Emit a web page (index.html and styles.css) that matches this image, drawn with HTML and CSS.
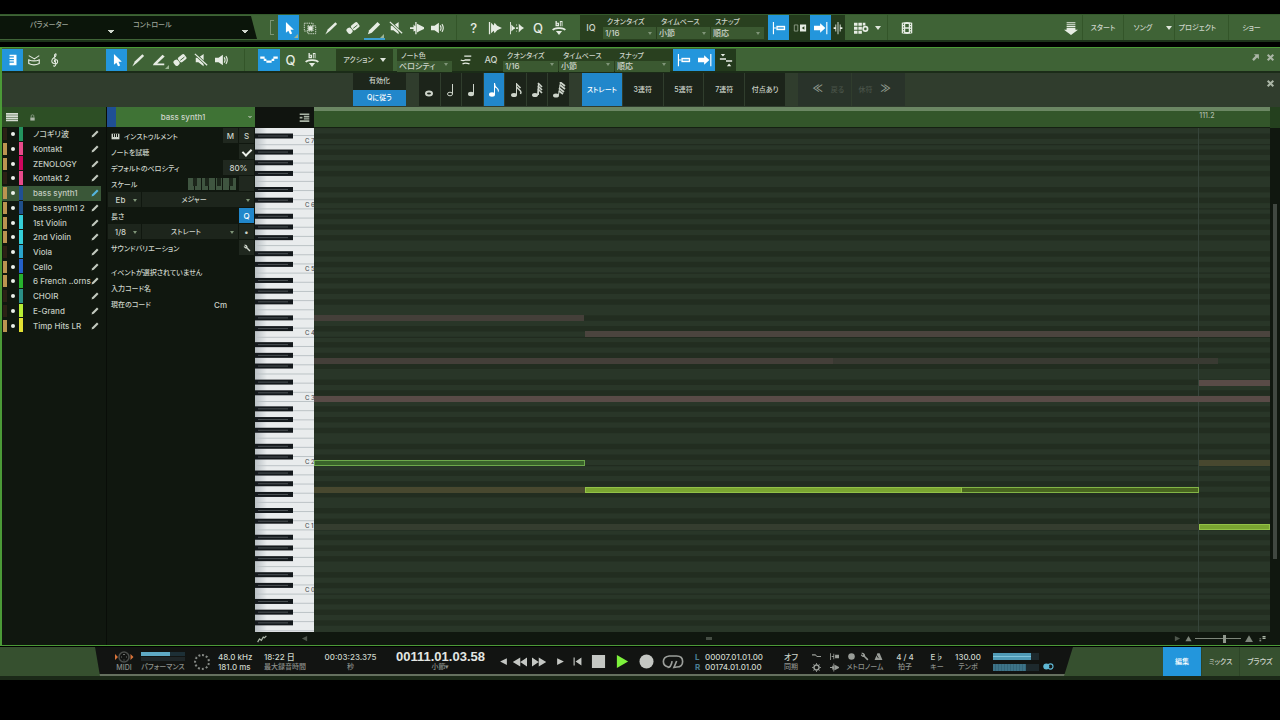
FILE: index.html
```
<!DOCTYPE html>
<html lang="ja">
	<head>
		<meta charset="UTF-8">
		<title>bass synth1</title>
		<link rel="stylesheet" href="styles.css">
	</head>
	<body>
		<svg class="sprite" width="0" height="0">
			<symbol id="arrow" viewBox="0 0 16 16"><path d="M4.500 1v12.500l2.800-2.500 1.900 4.200 2.400-1-1.900-4.200H13.500z"/></symbol>
			<symbol id="range" viewBox="0 0 16 16"><path d="M1.500 2.500h10v9h-10zM5.500 5.500h9v9h-9z" fill="none" stroke="currentColor" stroke-dasharray="1.500 1"/><path d="M6 6h5v5H6z"/></symbol>
			<symbol id="brush" viewBox="0 0 16 16"><path d="M1.500 15.500l3-6L13 1.500 15 3.500l-8 7.500z"/></symbol>
			<symbol id="pencil" viewBox="0 0 16 16"><path d="M1 15l1.500-4.500L12 1l3 3-9.500 9.500z"/></symbol>
			<symbol id="line" viewBox="0 0 16 16"><path d="M2 12L12 2l2.500 2L6 12h8v2H1z"/></symbol>
			<symbol id="eraser" viewBox="0 0 16 16"><g transform="rotate(-38 8 8)"><rect x="0" y="4.500" width="6" height="7" rx="2.500"/><rect x="6.700" y="4.500" width="9" height="7" rx="2"/><path d="M8 8.500h6" stroke="#3d6235"/></g></symbol>
			<symbol id="speaker" viewBox="0 0 16 16"><path d="M0 5.500h4L9 2v12l-5-3.500H0z"/><path d="M10.500 5q2 3 0 6M12.500 3.500q3 4.500 0 9" fill="none" stroke="currentColor" stroke-width="1.300"/></symbol>
			<symbol id="mute" viewBox="0 0 16 16"><path d="M2 5.500h3L11 1v14l-6-4.500H2z"/><path d="M1 1l14 13" stroke="#3d6235" stroke-width="3"/><path d="M1 1l14 13" stroke="currentColor" stroke-width="1.500"/></symbol>
			<symbol id="split" viewBox="0 0 16 16"><path d="M0 7h4V4l2 2V1h1.500v14H6v-4l-2 1V9H0zM8 3l3 1.500L16 7v2l-5 2.500L8 13z"/></symbol>
			<symbol id="wave" viewBox="0 0 16 16"><path d="M1 1h1.500v14H1zM3.500 2l3 3 1-3 3 3.500L16 8l-5.500 2.500-3 3.500-1-3-3 3z"/></symbol>
			<symbol id="wavegap" viewBox="0 0 16 16"><path d="M0 1h1v14H0zM1.500 4l3 3h1v2h-1l-3 3zM10 3l3 3 3 2-3 2-3 3zM7 4h1v1H7zM7 11h1v1H7zM7 7h2v2H7z"/></symbol>
			<symbol id="chordarc" viewBox="0 0 16 16"><path d="M4 0h1.500v2H8v4H4zm1.500 3.200v1.500h1V3.200zM9 0h3v6h-1V1h-1v5H9z"/><path d="M1 10.500q1-2.500 6-2.500h2q5 0 6 2.500" fill="none" stroke="currentColor" stroke-width="2"/><path d="M4.500 11.500h7L8 16z"/></symbol>
			<symbol id="keyb" viewBox="0 0 16 16"><path d="M4 2h8v12H4z"/><path d="M3 4.500h6M3 7.500h6M3 10.500h6" stroke="#2396dc" stroke-width="1.500"/></symbol>
			<symbol id="drum" viewBox="0 0 16 16"><path d="M2 7v5q6 3 12 0V7" fill="none" stroke="currentColor" stroke-width="1.300"/><path d="M2 8q6 2 12 0M2 3l7 4M14 3L8 7" fill="none" stroke="currentColor" stroke-width="1.200"/></symbol>
			<symbol id="clef" viewBox="0 0 16 16"><path d="M8.500 10.500Q6 9.500 8 8q3-1 3 2t-4 2-2-5l3.500-3Q10 1 8.500 1 7 1.500 7.500 4l1.500 9q-1 3-3 1.500" fill="none" stroke="currentColor" stroke-width="1.200"/></symbol>
			<symbol id="steps" viewBox="0 0 20 16"><path d="M0 4h5v2.500H0zM4 6.500h3V9H4zM7 8.500h6V11H7zM13 6.500h3V9h-3zM15 4h5v2.500h-5z"/></symbol>
			<symbol id="strum" viewBox="0 0 16 16"><path d="M6 3.500h8M2 8q3 1.500 5 0h6M4 12.500q3-2 8 0" fill="none" stroke="currentColor" stroke-width="1.500"/></symbol>
			<symbol id="snapstart" viewBox="0 0 16 16"><path d="M1 1h1.300v14H1zM2 7.500h3v1H2z"/><path d="M5 5.500h10v5H5z"/><path d="M6.500 8h7" stroke="#2396dc" stroke-width="1.500"/></symbol>
			<symbol id="snapend" viewBox="0 0 16 16"><path d="M0 5.500h7V2.500L13 8l-6 5.500v-3H0zM14 1h1.300v14H14z"/></symbol>
			<symbol id="snapev" viewBox="0 0 16 16"><path d="M1.500 4.500h4v7h-4z" fill="none" stroke="#91a08c"/><path d="M8 4h7v8H8z"/><path d="M13 6v4l-3-2z" fill="#29401f"/></symbol>
			<symbol id="cursor" viewBox="0 0 16 16"><path d="M7.500 1h1v14h-1zM5 4h1v8H5zM10 4h1v8h-1zM3 7h2v2H3zM11 7h2v2h-2z"/></symbol>
			<symbol id="gridset" viewBox="0 0 20 16"><path d="M2 2h4v3.500H2zM7 2h4v3.500H7zM12 2h3v3h-3zM2 6.500h4V10H2zM7 6.500h4V10H7zM2 11h4v3.500H2zM7 11h4v3.500H7z"/><circle cx="15" cy="9" r="2.500" fill="none" stroke="currentColor" stroke-width="2"/></symbol>
			<symbol id="film" viewBox="0 0 16 16"><path d="M2 2q6-1.500 12 0v12q-6 1.500-12 0z"/><path d="M6 3.500h4v3.700H6zM6 8.800h4v3.700H6z" fill="#3d6235"/><path d="M4 3v11M12 3v11" stroke="#3d6235" stroke-dasharray="1.500 1.500"/></symbol>
			<symbol id="dock" viewBox="0 0 16 16"><path d="M3 1h10v1H3zM3 3h10v1.300H3zM3 5.500h10v1.500H3zM3 8h10v2h3l-8 6-8-6h3z"/></symbol>
			<symbol id="fold" viewBox="0 0 16 16"><path d="M1 6h7v1.700H1zM8 8.300h7V10H8zM2 1h5L4.500 4zM9 15h5l-2.500-3z"/></symbol>
			<symbol id="popout" viewBox="0 0 16 16"><path d="M5 2h9v9l-3-3-6 6-3-3 6-6z"/></symbol>
			<symbol id="cross" viewBox="0 0 16 16"><path d="M3 3l10 10M13 3L3 13" stroke="currentColor" stroke-width="3.500"/></symbol>
			<symbol id="whole" viewBox="0 0 16 16"><ellipse cx="8" cy="11.500" rx="3" ry="2" fill="none" stroke="currentColor" stroke-width="2"/></symbol>
			<symbol id="half" viewBox="0 0 16 16"><ellipse cx="7" cy="12" rx="2.500" ry="1.800" fill="none" stroke="currentColor"/><path d="M9 2h1v10H9z"/></symbol>
			<symbol id="quarter" viewBox="0 0 16 16"><ellipse cx="7" cy="12" rx="3" ry="2.200"/><path d="M9 2h1v10H9z"/></symbol>
			<symbol id="eighth" viewBox="0 0 16 16"><ellipse cx="6" cy="12.500" rx="3" ry="2.200"/><path d="M8 1h1q0 3 2.500 5t.5 4.500q0-4-3-5v7H8z"/></symbol>
			<symbol id="n16" viewBox="0 0 16 16"><ellipse cx="6" cy="13" rx="3" ry="2"/><path d="M8 1h1v12H8z"/><path d="M8.500 2l4 4M8.500 5l4 4q1 1 0 3" fill="none" stroke="currentColor" stroke-width="1.500"/></symbol>
			<symbol id="n32" viewBox="0 0 16 16"><ellipse cx="6" cy="13" rx="3" ry="2"/><path d="M9 1h1v12H8z"/><path d="M9 1l4 4M9 4l4 4M9 7l4 4" fill="none" stroke="currentColor" stroke-width="1.700"/></symbol>
			<symbol id="n64" viewBox="0 0 16 16"><ellipse cx="5" cy="13.500" rx="3" ry="2"/><path d="M9 0h1L8 13H7z"/><path d="M9 0l5 4M9 3l5 4M8 6l5 4M8 9l4 3" fill="none" stroke="currentColor" stroke-width="1.700"/></symbol>
			<symbol id="lines" viewBox="0 0 12 9"><path d="M0 0h12v1.700H0zM0 2.200h12v1.700H0zM0 4.400h12v1.700H0zM0 6.600h12v1.700H0z"/></symbol>
			<symbol id="lock" viewBox="0 0 16 16"><path d="M3 8h10v7H3z"/><path d="M5 8V4q0-2 3-2t3 2v4" fill="none" stroke="currentColor" stroke-width="1.500"/></symbol>
			<symbol id="indent" viewBox="0 0 16 16"><path d="M1 2h14v2.500H1zM1 12h14v2.500H1zM7 5.500h8V8H7zM7 9h8v2H7zM1 7h4v2.500H1z"/></symbol>
			<symbol id="piano" viewBox="0 0 16 16"><path d="M1 3h14v10H1z"/><path d="M4.500 3v6M8 3v6M11.500 3v6" stroke="#10170f" stroke-width="1.800"/></symbol>
			<symbol id="wrench" viewBox="0 0 16 16"><path d="M3 1l4 1 2 3v2l6 6-2 2-6-6H5L1.500 6l.5-2 3 2 1-1-3-2z"/></symbol>
			<symbol id="curve" viewBox="0 0 16 16"><path d="M1 13l3-5 3 2 3-5 2 1 3-3" fill="none" stroke="currentColor" stroke-width="2"/></symbol>
			<symbol id="left" viewBox="0 0 16 16"><path d="M14 2v12L2 8z"/></symbol>
			<symbol id="right" viewBox="0 0 16 16"><path d="M2 2v12l12-6z"/></symbol>
			<symbol id="rew" viewBox="0 0 20 16"><path d="M11 2v12L1 8zM20 2v12l-9-6z"/></symbol>
			<symbol id="fwd" viewBox="0 0 20 16"><path d="M0 2v12l9-6zM9 2v12l10-6z"/></symbol>
			<symbol id="tostart" viewBox="0 0 16 16"><path d="M1 1h2v14H1zM15 1v14L4.500 8z"/></symbol>
			<symbol id="stop" viewBox="0 0 16 16"><path d="M1 1h14v14H1z"/></symbol>
			<symbol id="play" viewBox="0 0 16 16"><path d="M2 1v14l12-7z"/></symbol>
			<symbol id="rec" viewBox="0 0 16 16"><circle cx="8" cy="8" r="7.500"/></symbol>
			<symbol id="loop" viewBox="0 0 24 16"><path d="M7 14Q1.500 13 1.500 8T8 2h8q6.500 0 6.500 6T16 14l-3 .5 3-7M6 14.500q4 0 5-7" fill="none" stroke="currentColor" stroke-width="1.800"/></symbol>
			<symbol id="midi" viewBox="0 0 20 12"><circle cx="10" cy="6" r="5" fill="none" stroke="#4a4d4a" stroke-width="1.500"/><path d="M7 6h1M12 6h1M9 3.500h2M9.500 9h1" stroke="#6a6d6a"/><path d="M1 3v6l3-3zM16.500 3v6l3-3z" fill="#d9743a"/></symbol>
			<symbol id="preroll" viewBox="0 0 16 16"><path d="M0 4h6l3 3h7v2H9L6 6H0z"/></symbol>
			<symbol id="punch" viewBox="0 0 16 16"><path d="M0 2h1.500v12H0zM3 7h3V3h1.500v10H6V9H3zM9 5h7v6H9z"/></symbol>
			<symbol id="gear" viewBox="0 0 16 16"><circle cx="8" cy="8" r="4.500" fill="none" stroke="currentColor" stroke-width="2.500"/><path d="M8 0v3M8 13v3M0 8h3M13 8h3M2.500 2.500l2 2M11.500 11.500l2 2M13.500 2.500l-2 2M4.500 11.500l-2 2" stroke="currentColor" stroke-width="1.500"/></symbol>
			<symbol id="metro" viewBox="0 0 16 16"><path d="M6 2h4l5 12H1z"/><path d="M8 11l-5-8" stroke="#121412" stroke-width="1.500"/></symbol>
			<symbol id="hill" viewBox="0 0 16 16"><path d="M8 2l7 12H1z"/></symbol>
			<symbol id="zoomset" viewBox="0 0 16 16"><path d="M1 12h4v2H1zM1 8h4v1.500H1zM8 2h7v3H8zM8 6.500h7V9H8z"/></symbol>
			<symbol id="rings" viewBox="0 0 20 16"><circle cx="6" cy="8" r="5.500"/><circle cx="13.500" cy="8" r="4.700" fill="none" stroke="currentColor" stroke-width="2"/></symbol>
		</svg>

		<header class="topbar">
			<div class="params">
				<select class="plain" aria-label="パラメーター"><option>パラメーター</option></select>
				<select class="plain" aria-label="コントロール"><option>コントロール</option></select>
			</div>
			<span class="bracket"></span>
			<div class="tools tools-main">
				<button class="tool on more" aria-label="矢印"><svg><use href="#arrow"/></svg></button>
				<button class="tool" aria-label="範囲"><svg><use href="#range"/></svg></button>
				<button class="tool" aria-label="分割"><svg><use href="#brush"/></svg></button>
				<button class="tool" aria-label="消去"><svg><use href="#eraser"/></svg></button>
				<button class="tool under more" aria-label="ペイント"><svg><use href="#pencil"/></svg></button>
				<button class="tool" aria-label="ミュート"><svg><use href="#mute"/></svg></button>
				<button class="tool" aria-label="ベンド"><svg><use href="#split"/></svg></button>
				<button class="tool" aria-label="試聴"><svg><use href="#speaker"/></svg></button>
			</div>
			<div class="tools tools-help">
				<button class="tool letter">?</button>
				<button class="tool" aria-label="トランジェント"><svg><use href="#wave"/></svg></button>
				<button class="tool" aria-label="ギャップ"><svg><use href="#wavegap"/></svg></button>
				<button class="tool letter">Q</button>
				<button class="tool" aria-label="コード"><svg><use href="#chordarc"/></svg></button>
			</div>
			<div class="quant">
				<button class="iq">IQ</button>
				<label class="field">クオンタイズ<select><option>1/16</option></select></label>
				<label class="field">タイムベース<select><option>小節</option></select></label>
				<label class="field">スナップ<select><option>順応</option></select></label>
			</div>
			<div class="snaps">
				<button class="tool on" aria-label="スナップ開始"><svg><use href="#snapstart"/></svg></button>
				<button class="tool" aria-label="イベントにスナップ"><svg><use href="#snapev"/></svg></button>
				<button class="tool on" aria-label="スナップ終了"><svg><use href="#snapend"/></svg></button>
				<button class="tool thin" aria-label="カーソル"><svg><use href="#cursor"/></svg></button>
			</div>
			<button class="tool gridbtn" aria-label="グリッド"><svg><use href="#gridset"/></svg><i class="tri"></i></button>
			<button class="tool film" aria-label="ビデオ"><svg><use href="#film"/></svg></button>
			<nav class="pages">
				<button class="tool" aria-label="ドック"><svg><use href="#dock"/></svg></button>
				<button class="page w-start">スタート</button>
				<button class="page w-song">ソング<i class="tri"></i></button>
				<button class="page w-project">プロジェクト</button>
				<button class="page w-show">ショー</button>
			</nav>
		</header>

		<main class="editor">
			<div class="editbar">
				<div class="tools tools-view">
					<button class="tool on" aria-label="ピアノ"><svg><use href="#keyb"/></svg></button>
					<button class="tool" aria-label="ドラム"><svg><use href="#drum"/></svg></button>
					<button class="tool" aria-label="スコア"><svg><use href="#clef"/></svg></button>
				</div>
				<div class="tools tools-edit">
					<button class="tool on" aria-label="矢印"><svg><use href="#arrow"/></svg></button>
					<button class="tool" aria-label="ペイント"><svg><use href="#brush"/></svg></button>
					<button class="tool more" aria-label="直線"><svg><use href="#line"/></svg></button>
					<button class="tool" aria-label="消去"><svg><use href="#eraser"/></svg></button>
					<button class="tool" aria-label="ミュート"><svg><use href="#mute"/></svg></button>
					<button class="tool" aria-label="試聴"><svg><use href="#speaker"/></svg></button>
				</div>
				<div class="tools tools-auto">
					<button class="tool on" aria-label="オートスクロール"><svg><use href="#steps"/></svg></button>
					<button class="tool letter">Q</button>
					<button class="tool" aria-label="コード"><svg><use href="#chordarc"/></svg></button>
				</div>
				<button class="action">アクション<i class="tri"></i></button>
				<div class="quant quant-edit">
					<label class="field">ノート色<select><option>ベロシティ</option></select></label>
					<button class="tool" aria-label="ストラム"><svg><use href="#strum"/></svg></button>
					<button class="iq">AQ</button>
					<label class="field">クオンタイズ<select><option>1/16</option></select></label>
					<label class="field">タイムベース<select><option>小節</option></select></label>
					<label class="field">スナップ<select><option>順応</option></select></label>
				</div>
				<div class="snaps">
					<button class="tool on" aria-label="スナップ開始"><svg><use href="#snapstart"/></svg></button>
					<button class="tool on" aria-label="スナップ終了"><svg><use href="#snapend"/></svg></button>
					<button class="tool" aria-label="折りたたみ"><svg><use href="#fold"/></svg></button>
				</div>
				<div class="winbtns">
					<button class="small" aria-label="切り離す"><svg><use href="#popout"/></svg></button>
					<button class="small" aria-label="閉じる"><svg><use href="#cross"/></svg></button>
				</div>
			</div>

			<div class="qbar">
				<div class="enable">
					<button>有効化</button>
					<button class="on">Qに従う</button>
				</div>
				<div class="lengths">
					<button aria-label="全音符"><svg><use href="#whole"/></svg></button>
					<button aria-label="2分音符"><svg><use href="#half"/></svg></button>
					<button aria-label="4分音符"><svg><use href="#quarter"/></svg></button>
					<button class="on" aria-label="8分音符"><svg><use href="#eighth"/></svg></button>
					<button aria-label="16分音符"><svg><use href="#n16"/></svg></button>
					<button aria-label="32分音符"><svg><use href="#n32"/></svg></button>
					<button aria-label="64分音符"><svg><use href="#n64"/></svg></button>
				</div>
				<div class="tuplets">
					<button class="on">ストレート</button>
					<button>3連符</button>
					<button>5連符</button>
					<button>7連符</button>
					<button>付点あり</button>
				</div>
				<div class="stepnav">
					<button disabled><b>≪</b>戻る</button>
					<button disabled>休符<b>≫</b></button>
				</div>
				<button class="small" aria-label="閉じる"><svg><use href="#cross"/></svg></button>
			</div>

			<div class="work">
				<section class="tracks">
					<div class="tracks-head">
						<button class="small" aria-label="リスト"><svg><use href="#lines"/></svg></button>
						<button class="small" aria-label="ロック"><svg><use href="#lock"/></svg></button>
					</div>
					<ul id="trackList"></ul>
				</section>

				<section class="inspector">
					<select class="insp-head" aria-label="トラック"><option>bass synth1</option></select>
					<div class="row"><svg><use href="#piano"/></svg><span class="name">インストゥルメント</span><button class="cell">M</button><button class="cell">S</button></div>
					<label class="row"><span class="name">ノートを試聴</span><input class="cell check" type="checkbox" checked></label>
					<label class="row"><span class="name">デフォルトのベロシティ</span><input class="cell vel" type="text" value="80%"></label>
					<div class="row"><span class="name">スケール</span><span class="minikeys"></span><button class="cell" aria-label="スケール適用"></button></div>
					<div class="row"><span class="drop key"><select aria-label="キー"><option>Eb</option></select></span><span class="drop"><select aria-label="スケール"><option>メジャー</option></select></span></div>
					<div class="row"><span class="name">長さ</span><button class="cell on">Q</button></div>
					<div class="row"><span class="drop key"><select aria-label="長さ"><option>1/8</option></select></span><span class="drop"><select aria-label="種類"><option>ストレート</option></select></span><button class="cell">•</button></div>
					<div class="row"><span class="name">サウンドバリエーション</span><button class="cell" aria-label="設定"><svg><use href="#wrench"/></svg></button></div>
					<div class="info">
						<p>イベントが選択されていません</p>
						<p>入力コード名</p>
						<p>現在のコード<span>Cm</span></p>
					</div>
				</section>

				<section class="roll">
					<div class="keyhead"><button class="small" aria-label="表示"><svg><use href="#indent"/></svg></button></div>
					<div class="ruler"><span>111.2</span></div>
					<div class="corner"></div>
					<div class="keys" id="keys"></div>
					<div class="grid" id="grid"></div>
					<div class="vscroll"><i></i></div>
					<div class="rollfoot">
						<button class="small" aria-label="オートメーション"><svg><use href="#curve"/></svg></button>
						<button class="small dim" aria-label="左へ"><svg><use href="#left"/></svg></button>
						<span class="hthumb"></span>
						<button class="small dim" aria-label="右へ"><svg><use href="#right"/></svg></button>
						<svg><use href="#hill"/></svg>
						<input class="zoomer" type="range" value="65" aria-label="ズーム">
						<svg class="big"><use href="#hill"/></svg>
						<button class="small" aria-label="ズーム設定"><svg><use href="#zoomset"/></svg></button>
					</div>
				</section>
			</div>
		</main>

		<footer class="transport">
			<div class="deck">
				<div class="stat c-midi"><svg><use href="#midi"/></svg><small>MIDI</small></div>
				<div class="stat c-perf"><div class="bars"><i></i><i></i></div><small>パフォーマンス</small></div>
				<div class="c-dial"></div>
				<div class="stat lefty c-rate"><span>48.0 kHz</span><span>181.0 ms</span></div>
				<div class="stat lefty c-rec"><span>18:22 日</span><small>最大録音時間</small></div>
				<div class="stat c-sec"><span>00:03:23.375</span><small>秒</small></div>
				<div class="stat c-pos"><strong>00111.01.03.58</strong><small>小節▾</small></div>
				<div class="buttons">
					<button class="s" aria-label="前へ"><svg><use href="#left"/></svg></button>
					<button class="m" aria-label="巻き戻し"><svg><use href="#rew"/></svg></button>
					<button class="m" aria-label="早送り"><svg><use href="#fwd"/></svg></button>
					<button class="s" aria-label="次へ"><svg><use href="#right"/></svg></button>
					<button class="s" aria-label="先頭へ"><svg><use href="#tostart"/></svg></button>
					<button class="l" aria-label="停止"><svg><use href="#stop"/></svg></button>
					<button class="l playing" aria-label="再生"><svg><use href="#play"/></svg></button>
					<button class="l" aria-label="録音"><svg><use href="#rec"/></svg></button>
					<button class="xl" aria-label="ループ"><svg><use href="#loop"/></svg></button>
				</div>
				<div class="stat lefty c-loop"><span><b>L</b>00007.01.01.00</span><span><b>R</b>00174.01.01.00</span></div>
				<div class="stat c-sync"><span>オフ</span><small>同期</small></div>
				<div class="c-icons"><svg><use href="#preroll"/></svg><svg><use href="#punch"/></svg><svg><use href="#gear"/></svg><svg><use href="#split"/></svg></div>
				<div class="stat c-metro"><div class="trio"><svg><use href="#rec"/></svg><svg><use href="#wrench"/></svg><svg><use href="#metro"/></svg></div><small>メトロノーム</small></div>
				<div class="stat c-sig"><span>4 / 4</span><small>拍子</small></div>
				<div class="stat c-key"><span>E♭</span><small>キー</small></div>
				<div class="stat c-tempo"><span>130.00</span><small>テンポ</small></div>
				<div class="c-meter"><i></i><i></i></div>
				<svg class="rings"><use href="#rings"/></svg>
			</div>
			<div class="views">
				<button class="on">編集</button>
				<button>ミックス</button>
				<button>ブラウズ</button>
			</div>
		</footer>

		<script type="text/javascript">
			//名前, 色, メーター点灯
			var tracks = [
				["ノコギリ波","#23935f",0],["Kontakt","#e84a8a",1],["ZENOLOGY","#d0065f",1],["Kontakt 2","#e84a8a",0],
				["bass synth1","#1f4f94",1],["bass synth1 2","#1f4f8a",1],["1st Violin","#35cfd8",1],["2nd Violin","#35cfd8",1],
				["Viola","#2aa5cc",0],["Cello","#2461c9",1],["6 French ..orns","#27b32e",1],["CHOIR","#2b8f86",0],
				["E-Grand","#b8ee35",0],["Timp Hits LR","#e2e033",1]
			];
			var html = "";
			for(var i = 0; i < tracks.length; i++){
				var t = tracks[i];
				html += '<li' + (i == 4 ? ' class="selected"' : '') + '><i class="act' + (t[2] ? ' lit' : '') + '"></i><i class="dot"></i>'
					+ '<i class="color" style="background:' + t[1] + '"></i><button>' + t[0] + '</button>'
					+ '<svg><use href="#pencil"/></svg></li>';
			}
			document.getElementById("trackList").innerHTML = html;

			//1オクターブの高さと、一番上のC7の下端
			var H = 504, OCT = 64.2, SEMI = OCT / 12, C7 = 16.2;
			var black = [1,3,6,8,10];
			var white = "", dark = "", rows = "", labels = "";
			for(var o = -1; o < 9; o++){
				var base = C7 + o * OCT;
				for(var w = 0; w < 7; w++){
					white += '<rect x="0" y="' + (base - w * OCT / 7) + '" width="59" height="1" fill="#bcc3c6"/>';
				}
				for(var b = 0; b < black.length; b++){
					var y = base - (black[b] + 1) * SEMI;
					dark += '<rect x="0" y="' + y + '" width="38" height="5" fill="#14191c"/><rect x="3" y="' + (y + 2) + '" width="30" height="1" fill="#4d5356"/>';
					rows += '<rect x="0" y="' + y + '" width="100" height="' + SEMI + '" fill="#222d20"/>';
				}
				rows += '<rect x="0" y="' + base + '" width="100" height="1" fill="#202a1e"/>';
				if(o >= 0 && o < 8){
					labels += '<span style="top:' + (base - 3.5) / H * 100 + '%">C ' + (7 - o) + '</span>';
				}
			}
			document.getElementById("keys").innerHTML = '<svg viewBox="0 0 59 504" preserveAspectRatio="none">' + white + dark + '</svg>' + labels;

			//オクターブ, 半音, 開始, 終了(0-956), 種類
			var notes = [
				[4,3,0,270,"g1"],[4,0,271,956,"g2"],[3,7,0,519,"g1"],[3,7,519,904,"g0"],
				[3,3,885,956,"g3"],[3,0,0,956,"g3"],[2,0,0,271,"sel"],[2,0,885,956,"olive"],
				[1,7,0,271,"olive"],[1,7,271,885,"long"],[1,7,271,648,"bright"],[1,0,0,885,"faint"],[1,0,885,956,"bright"]
			];
			var bars = "";
			for(var n = 0; n < notes.length; n++){
				var k = notes[n];
				var noteTop = C7 + (7 - k[0]) * OCT - (k[1] + 1) * SEMI;
				bars += '<i class="note ' + k[4] + '" style="top:' + noteTop / H * 100 + '%;left:' + k[2] / 9.56 + '%;width:' + (k[3] - k[2]) / 9.56 + '%"></i>';
			}
			document.getElementById("grid").innerHTML = '<svg viewBox="0 0 100 504" preserveAspectRatio="none">' + rows + '</svg><i class="beat"></i>' + bars;
		</script>
	</body>
</html>
```
FILE: styles.css
```
*{
	margin: 0;
	padding: 0;
	box-sizing: border-box;
	list-style: none;
}
body{
	display: flex;
	flex-direction: column;
	height: 100vh;
	padding: 14px 0 40px;
	background-color: #000;
	color: #cdd4ca;
	font: 500 8px/10px Inter, "Noto Sans CJK JP", sans-serif;
	font-feature-settings: "palt";
	white-space: nowrap;
	overflow: hidden;
}
button, select, input{
	border: 0;
	border-radius: 0;
	background-color: transparent;
	color: inherit;
	font: inherit;
	font-feature-settings: inherit;
	appearance: none;
	outline: none;
}
svg{
	display: block;
	fill: currentColor;
	flex: none;
}
.sprite{
	position: absolute;
}
.tri{
	display: inline-block;
	border: 3px solid transparent;
	border-top: 4px solid #dfe6db;
	border-bottom: 0;
}

/* 上のツールバー */
.topbar{
	display: flex;
	height: 28px;
	flex: none;
	background-color: #3f6336;
	border-top: 1px solid #345a2c;
	border-bottom: 2px solid #1d331a;
}
.params{
	display: flex;
	width: 257px;
	margin: 1px 0;
	padding-right: 5px;
	background-color: #0b150a;
	clip-path: polygon(0 0, 251px 0, 257px 100%, 0 100%);
}
.plain{
	width: 118px;
	padding: 0 30px 6px 30px;
	color: #9ba398;
	font-size: 7px;
	background: linear-gradient(to bottom left, #cfd6cc 50%, transparent 51%) no-repeat right 7px bottom 5px / 3px 4px, linear-gradient(to bottom right, #cfd6cc 50%, transparent 51%) no-repeat right 4px bottom 5px / 3px 4px;
}
.plain + .plain{
	width: 134px;
	padding: 0 20px 6px 15px;
}
.bracket{
	width: 4px;
	height: 15px;
	margin: 5px 4px 0 13px;
	border: 1px solid #7c9573;
	border-right: 0;
}
.tools{
	display: flex;
}
.tool{
	display: flex;
	align-items: center;
	justify-content: center;
	flex: 1 1 0;
	color: #e6ece3;
	position: relative;
}
.tool svg{
	width: 14px;
	height: 14px;
}
.letter{
	font-size: 13px;
}
.on{
	background-color: #2396dc;
	color: #fff;
}
.under{
	box-shadow: inset 0 -2px #3d9fd0;
}
.more::after{
	content: "";
	position: absolute;
	right: 1px;
	bottom: 2px;
	border: 2px solid #9db596;
	border-top-color: transparent;
	border-left-color: transparent;
}
.tools-main{
	width: 171px;
	margin-right: 7px;
}
.tools-help{
	width: 124px;
	padding: 0 10px 0 6px;
	border-left: 1px solid #335529;
}
.quant{
	display: flex;
	gap: 1px;
	padding-right: 4px;
	background-color: #29401f;
}
.iq{
	width: 22px;
	text-align: center;
	font-size: 9px;
}
.field{
	display: flex;
	flex-direction: column;
	width: 53px;
	padding-top: 1px;
	text-indent: 4px;
	font-size: 7px;
	line-height: 11px;
	position: relative;
}
.field select{
	width: 100%;
	height: 12px;
	padding-left: 2px;
	background-color: #3b5931;
	font-size: 8px;
	text-indent: 0;
}
.field::after, .drop::after{
	content: "";
	position: absolute;
	right: 4px;
	bottom: 5px;
	border: 2px solid transparent;
	border-top: 3px solid #7f9578;
	border-bottom: 0;
}
.snaps{
	display: flex;
	background-color: #233a1c;
}
.snaps .tool{
	flex: none;
	width: 21px;
}
.snaps .thin{
	width: 14px;
}
.topbar .gridbtn{
	flex: none;
	gap: 5px;
	width: 43px;
	border-right: 1px solid #335529;
}
.gridbtn svg, .tools-auto .on svg{
	width: 18px;
}
.topbar .film{
	flex: none;
	width: 37px;
}
.pages{
	display: flex;
	margin-left: auto;
}
.pages .tool{
	flex: none;
	width: 22px;
}
.page{
	border-left: 1px solid #335529;
	font-size: 7px;
}
.w-start{
	width: 41px;
}
.w-song{
	width: 51px;
	padding-left: 8px;
}
.w-song .tri{
	margin-left: 14px;
}
.w-project{
	width: 54px;
	padding-right: 8px;
}
.w-show{
	width: 52px;
	padding-right: 6px;
}

/* エディター */
.editor{
	display: flex;
	flex-direction: column;
	flex: 1;
	min-height: 0;
	margin-top: 5px;
	border: 1px solid #4b9a37;
	border-width: 1px 0 1px 2px;
	background-color: #10170f;
}
.editbar{
	display: flex;
	height: 25px;
	flex: none;
	padding-top: 1px;
	background-color: #3f6336;
	border-bottom: 2px solid #1b2c18;
}
.tools-view{
	width: 64px;
	margin-right: 40px;
}
.tools-edit{
	width: 139px;
	padding-right: 11px;
	border-right: 1px solid #335529;
}
.tools-auto{
	width: 78px;
	margin-left: 13px;
	padding-right: 13px;
}
.action{
	width: 57px;
	margin-right: 2px;
	background-color: #29401f;
	font-size: 7px;
}
.action .tri{
	margin-left: 6px;
}
.quant-edit{
	padding-right: 3px;
	border-left: 2px solid #3f6336;
}
.quant-edit .field{
	width: 55px;
}
.quant-edit .tool{
	flex: none;
	width: 26px;
}
.winbtns{
	display: flex;
	gap: 5px;
	margin: 3px 5px 0 auto;
	height: 10px;
}
.small{
	display: flex;
	align-items: center;
	justify-content: center;
	width: 10px;
	color: #aab5a6;
}
.small svg{
	width: 9px;
	height: 9px;
}

.qbar{
	display: flex;
	height: 34px;
	flex: none;
	padding: 0 5px 1px 351px;
	background-color: #303d2d;
}
.qbar button{
	font-size: 7px;
}
.enable{
	display: grid;
	grid-template-rows: 1fr 1fr;
	width: 53px;
	margin-right: 13px;
	background-color: #1d261b;
}
.lengths{
	display: flex;
	width: 150px;
	gap: 1px;
	margin-right: 13px;
}
.lengths button{
	display: flex;
	align-items: center;
	justify-content: center;
	flex: 1;
	background-color: #1c241a;
}
.lengths svg{
	width: 16px;
	height: 16px;
}
.tuplets{
	display: flex;
	gap: 1px;
	width: 203px;
	margin-right: 13px;
}
.tuplets button{
	flex: 1;
	background-color: #1c241a;
}
.qbar .on{
	background-color: #2187cb;
}
.stepnav{
	display: flex;
	gap: 1px;
	width: 107px;
}
.stepnav button{
	flex: 1;
	background-color: #29332a;
	color: #495349;
}
.stepnav b{
	margin: 0 8px;
	color: #929c90;
	font-size: 10px;
	line-height: 8px;
}
.qbar > .small{
	height: 20px;
	margin-left: auto;
}

.work{
	display: flex;
	flex: 1;
	min-height: 0;
}
.tracks{
	width: 105px;
	border-right: 1px solid #090d08;
	color: #c3cbc0;
}
.tracks-head{
	display: flex;
	align-items: center;
	gap: 10px;
	height: 20px;
	padding-left: 5px;
	background-color: #2d4f25;
}
.tracks-head .small:first-child svg{
	width: 12px;
	color: #d5dcd2;
}
.tracks-head .small + .small svg{
	width: 7px;
}
.tracks ul{
	display: grid;
	grid-auto-rows: 1fr;
	height: 206px;
}
.tracks li{
	display: flex;
	align-items: center;
	margin-right: 6px;
	padding-left: 1px;
}
.tracks .selected{
	background-color: #3a5738;
}
.act{
	width: 4px;
	height: 12px;
	background-color: #2b2115;
}
.lit{
	background-color: #ba9450;
}
.dot{
	width: 4px;
	height: 4px;
	margin: 0 4px;
	border-radius: 50%;
	background-color: #edf1eb;
}
.color{
	width: 4px;
	height: 100%;
	border-bottom: 1px solid #10170f;
}
.tracks li button{
	flex: 1;
	padding-left: 10px;
	text-align: left;
}
.tracks li svg{
	width: 8px;
	height: 8px;
	margin-right: 2px;
}
.selected svg{
	color: #55b5df;
}

.inspector{
	width: 148px;
	font-size: 7px;
}
.insp-head{
	width: 100%;
	height: 20px;
	margin-bottom: 1px;
	border-left: 9px solid #1f4f94;
	padding-right: 5px;
	background: linear-gradient(to bottom left, #8aa583 50%, transparent 51%) no-repeat right 5px center / 2px 3px, linear-gradient(to bottom right, #8aa583 50%, transparent 51%) no-repeat right 3px center / 2px 3px, #3f7335;
	font-size: 8px;
	text-align-last: center;
}
.row{
	display: flex;
	gap: 1px;
	height: 16px;
	padding: 0 1px;
}
.row > svg{
	width: 9px;
	height: 9px;
	margin: 4px 3px 0;
}
.name{
	flex: 1;
	padding-left: 3px;
	line-height: 17px;
}
.row svg + .name{
	padding-left: 0;
}
.cell{
	width: 15px;
	height: 15px;
	background-color: #20281f;
	text-align: center;
	font-size: 8px;
}
.cell.on{
	background-color: #2187cb;
}
.cell svg{
	width: 8px;
	height: 8px;
	margin: auto;
}
.vel{
	width: 31px;
}
.check:checked::before{
	content: "";
	display: block;
	width: 4px;
	height: 7px;
	margin: 3px 5px;
	border: solid #eef2ec;
	border-width: 0 2px 2px 0;
	transform: rotate(45deg);
}
.minikeys{
	width: 49px;
	height: 12px;
	margin: 2px 1px 0 0;
	background: repeating-linear-gradient(90deg, transparent 0 5px, #1c261b 5px 9px, transparent 9px 12px) no-repeat 0 0 / 100% 8px, repeating-linear-gradient(90deg, #3f5540 0 6px, #10170f 6px 7px);
}
.drop{
	flex: 1;
	height: 15px;
	background-color: #1d251c;
	position: relative;
}
.drop select{
	width: 100%;
	height: 15px;
	padding-right: 8px;
	text-align-last: center;
}
.drop.key{
	flex: none;
	width: 33px;
	font-size: 8px;
}
.info{
	padding: 9px 4px 0;
}
.info p{
	display: flex;
	height: 16px;
	line-height: 16px;
}
.info span{
	margin: 0 24px 0 auto;
	font-size: 8px;
}

/* ピアノロール */
.roll{
	display: grid;
	grid-template: 21px 1fr 13px / 59px 1fr 10px;
	flex: 1;
	min-width: 0;
}
.keyhead{
	display: flex;
	justify-content: flex-end;
	padding-right: 5px;
	background-color: #10140f;
}
.keyhead svg{
	width: 11px;
	height: 11px;
}
.ruler{
	border-top: 4px solid #6b8763;
	border-bottom: 1px solid #152012;
	padding-left: calc(92.5% + 1px);
	background-color: #33562a;
	color: #adbba8;
	font-size: 7px;
}
.corner{
	background-color: #24401e;
}
.keys{
	position: relative;
	overflow: hidden;
	background: linear-gradient(90deg, #b9c0c4, #e9eced 12px, #e9eced);
}
.keys svg, .grid svg{
	width: 100%;
	height: 100%;
}
.keys span{
	position: absolute;
	left: 50px;
	color: #4d5255;
	font-size: 6px;
	line-height: 6px;
	margin-top: -3px;
}
.grid{
	position: relative;
	overflow: hidden;
	background-color: #293628;
}
.beat{
	position: absolute;
	left: 92.5%;
	top: 0;
	width: 1px;
	height: 100%;
	background-color: #36443a;
}
.note{
	position: absolute;
	height: 6px;
}
.g0{ background-color: #393a32; }
.g1{ background-color: #443f39; }
.g2{ background-color: #4b443e; }
.g3{ background-color: #594b47; }
.olive{ background-color: #48482f; }
.faint{ background-color: #353d2f; }
.sel{
	border: 1px solid #6da84c;
	background-color: #3a632b;
}
.long{
	border: 1px solid #83b546;
	background-color: #49651f;
}
.bright{
	border: 1px solid #93c247;
	background-color: #7aa531;
}
.vscroll{
	padding: 76px 0 73px 3px;
	background-color: #10170f;
}
.vscroll i{
	display: block;
	width: 4px;
	height: 100%;
	background-color: #414841;
}
.rollfoot{
	grid-column: 1 / -1;
	display: flex;
	align-items: center;
	gap: 3px;
	padding: 0 13px 0 2px;
	background-color: #10170f;
	color: #7d857a;
}
.rollfoot svg{
	width: 7px;
	height: 7px;
}
.rollfoot .small:first-child svg{
	width: 10px;
	height: 10px;
}
.rollfoot .big{
	width: 10px;
	height: 9px;
}
.rollfoot .dim{
	color: #4f574d;
}
.rollfoot .dim:nth-child(2){
	margin-left: 29px;
}
.hthumb{
	width: 6px;
	height: 3px;
	margin: 0 auto 0 39%;
	background-color: #454d43;
}
.zoomer{
	width: 46px;
	height: 9px;
	background: linear-gradient(#7d857a, #7d857a) no-repeat center / 100% 1px;
}
.zoomer::-webkit-slider-thumb{
	appearance: none;
	width: 3px;
	height: 8px;
	background-color: #8f978c;
}

/* トランスポート */
.transport{
	display: flex;
	height: 33px;
	flex: none;
	margin-top: 1px;
	background-color: #36502f;
	border-bottom: 4px solid #1b2918;
}
.deck{
	display: flex;
	align-items: center;
	width: 978px;
	margin-left: 95px;
	padding-left: 17px;
	background: linear-gradient(#121412 27px, #65705f 0);
	clip-path: polygon(0 0, 100% 0, calc(100% - 9px) 100%, 5px 100%);
}
.deck svg{
	width: 9px;
	height: 9px;
}
.stat{
	display: flex;
	flex-direction: column;
	align-items: center;
	justify-content: center;
}
.stat span, .stat strong{
	height: 10px;
}
.stat small{
	height: 10px;
	color: #8c908b;
	font-size: 7px;
}
.lefty{
	align-items: flex-start;
}
.c-midi{
	width: 24px;
}
.c-midi svg{
	width: 20px;
	height: 12px;
}
.c-perf{
	width: 54px;
}
.bars{
	display: grid;
	gap: 1px;
	width: 44px;
	height: 10px;
	padding-bottom: 1px;
}
.bars i{
	background: linear-gradient(90deg, #5fa9c4 29px, #1d2f36 0);
}
.bars i + i{
	background: #1f2628;
}
.c-dial{
	width: 16px;
	height: 16px;
	margin: 0 8px 0 4px;
	border: 2px dotted #858985;
	border-radius: 50%;
}
.c-rate{
	width: 46px;
}
.c-rec{
	width: 56px;
}
.c-sec{
	width: 61px;
}
.c-pos{
	width: 109px;
	margin-left: 5px;
}
.stat strong{
	color: #e3e6e2;
	font: bold 13px/10px "Liberation Sans", sans-serif;
}
.buttons{
	display: flex;
	align-items: center;
	width: 200px;
	color: #c4c7c3;
}
.buttons .s{
	width: 17px;
	padding-left: 4px;
}
.buttons .m{
	width: 20px;
}
.buttons .m svg{
	width: 15px;
	height: 12px;
}
.buttons .l{
	width: 24px;
	padding-left: 5px;
}
.buttons .l svg{
	width: 15px;
	height: 15px;
}
.buttons .xl{
	padding-left: 4px;
}
.buttons .xl svg{
	width: 22px;
	height: 15px;
	color: #9b9e9a;
}
.deck .playing{
	color: #7df23c;
}
.c-loop{
	width: 84px;
}
.c-loop b{
	display: inline-block;
	width: 10px;
	color: #4b7f96;
}
.c-sync{
	width: 24px;
}
.c-icons{
	display: grid;
	grid-template-columns: 1fr 1fr;
	justify-items: center;
	gap: 2px 0;
	width: 36px;
	margin: 0 5px 0 4px;
	color: #999d98;
}
.c-metro{
	width: 34px;
	color: #999d98;
}
.trio{
	display: flex;
	gap: 5px;
	height: 10px;
}
.trio svg:first-child{
	width: 7px;
}
.c-sig{
	width: 46px;
}
.c-key{
	width: 18px;
}
.c-tempo{
	width: 44px;
}
.c-meter{
	display: grid;
	gap: 4px;
	width: 46px;
	height: 18px;
	margin: 0 4px 0 3px;
}
.c-meter i{
	background: linear-gradient(#4f9ab5 3px, #7fc3da 3px 4px, #4f9ab5 4px) no-repeat 0 0 / 38px 100%, #1d292d;
}
.c-meter i + i{
	background: repeating-linear-gradient(90deg, #3d7387 0 2px, #34667a 2px 3px) no-repeat 0 0 / 33px 100%, #1d292d;
}
.deck .rings{
	width: 11px;
	height: 9px;
	margin-top: 10px;
	color: #5fb8d4;
}
.views{
	display: flex;
	margin-left: auto;
}
.views button{
	width: 38px;
	border-left: 1px solid #2d4527;
	font-size: 7px;
}
.views .on{
	border: 0;
}
.views button:last-child{
	width: 41px;
}
```
